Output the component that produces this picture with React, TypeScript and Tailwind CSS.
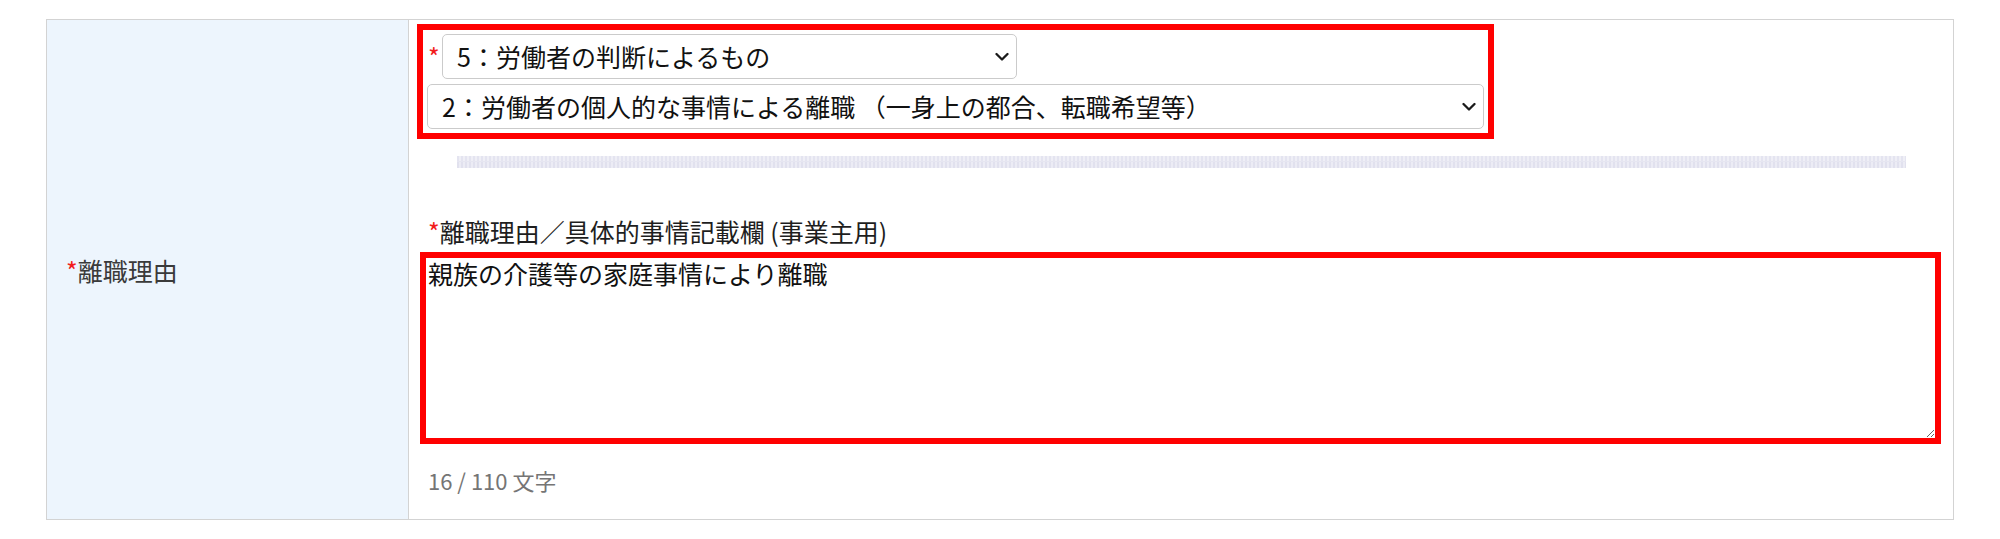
import React, { useState } from 'react';

const font = "font-['Noto_Sans_CJK_JP','Noto_Sans',sans-serif]";

const Chevron: React.FC = () => (
  <svg
    className="pointer-events-none absolute right-[8px] top-1/2 -translate-y-1/2"
    width="14"
    height="9"
    viewBox="0 0 14 9"
    fill="none"
  >
    <path d="M1.5 1.5 L7 7 L12.5 1.5" stroke="#1a1a1a" strokeWidth="2.3" strokeLinecap="round" strokeLinejoin="round" />
  </svg>
);

interface SelectProps {
  value: string;
  options: string[];
  width: string;
  onChange: (v: string) => void;
}

const Select: React.FC<SelectProps> = ({ value, options, width, onChange }) => (
  <div className={`relative ${width}`}>
    <select
      value={value}
      onChange={(e) => onChange(e.target.value)}
      className={`${font} h-[45px] w-full appearance-none rounded-[5px] border border-[#cbcbcb] bg-white pl-[14px] pr-[30px] text-[25px] text-[#111] outline-none`}
    >
      {options.map((o) => (
        <option key={o} value={o}>
          {o}
        </option>
      ))}
    </select>
    <Chevron />
  </div>
);

const reasons = [
  '1：事業所の倒産等によるもの',
  '2：定年によるもの',
  '3：労働契約期間満了等によるもの',
  '4：事業主からの働きかけによるもの',
  '5：労働者の判断によるもの',
];

const details = [
  '1：職場における事情による離職',
  '2：労働者の個人的な事情による離職 （一身上の都合、転職希望等）',
];

export default function App() {
  const [reason, setReason] = useState(reasons[4]);
  const [detail, setDetail] = useState(details[1]);
  const [text, setText] = useState('親族の介護等の家庭事情により離職');

  return (
    <div className={`${font} min-h-screen bg-white pt-[19px] pl-[46px]`}>
      <div className="flex w-[1908px] border border-[#d3d3d3]">
        {/* label column */}
        <div className="flex w-[362px] shrink-0 items-center border-r border-[#d3d3d3] bg-[#edf5fd] pl-[19px]">
          <span className="text-[25px] leading-[34px] text-[#3a3a3a]">
            <span className="text-[#f21c1c]">*</span>離職理由
          </span>
        </div>

        {/* field column */}
        <div className="flex-1 pt-[4px] pb-[24px] pl-[8px]">
          <div className="w-[1077px] border-[6px] border-[#ff0000] p-[4px]">
            <div className="flex">
              <span className="h-[45px] w-[15px] pl-[1px] text-[25px] leading-[45px] text-[#f21c1c]">*</span>
              <Select value={reason} options={reasons} width="w-[575px]" onChange={setReason} />
            </div>
            <div className="mt-[5px]">
              <Select value={detail} options={details} width="w-[1057px]" onChange={setDetail} />
            </div>
          </div>

          <div className="ml-[40px] mt-[17px] h-[12px] w-[1449px] bg-[repeating-linear-gradient(90deg,#e1e1ee_0px,#e1e1ee_2px,#ececf5_2px,#ececf5_4px)]">
            <div className="h-[6px] border-b border-[#e6e6f1] bg-[repeating-linear-gradient(90deg,#e4e4f0_0px,#e4e4f0_2px,#efeff6_2px,#efeff6_4px)]" />
          </div>

          <div className="mt-[46px] pl-[11px] text-[25px] leading-[34px] text-[#1e1e1e]">
            <span className="text-[#f21c1c]">*</span>離職理由／具体的事情記載欄 (事業主用)
          </div>

          <textarea
            value={text}
            onChange={(e) => setText(e.target.value)}
            maxLength={110}
            className={`${font} ml-[3px] mt-[4px] block h-[192px] w-[1521px] border-[6px] border-[#ff0000] bg-white px-[2px] py-0 text-[25px] leading-[30px] text-[#111] outline-none`}
          />

          <div className="mt-[21px] pl-[11px] text-[22px] leading-[30px] text-[#757575]">
            {text.length} / 110 文字
          </div>
        </div>
      </div>
    </div>
  );
}
